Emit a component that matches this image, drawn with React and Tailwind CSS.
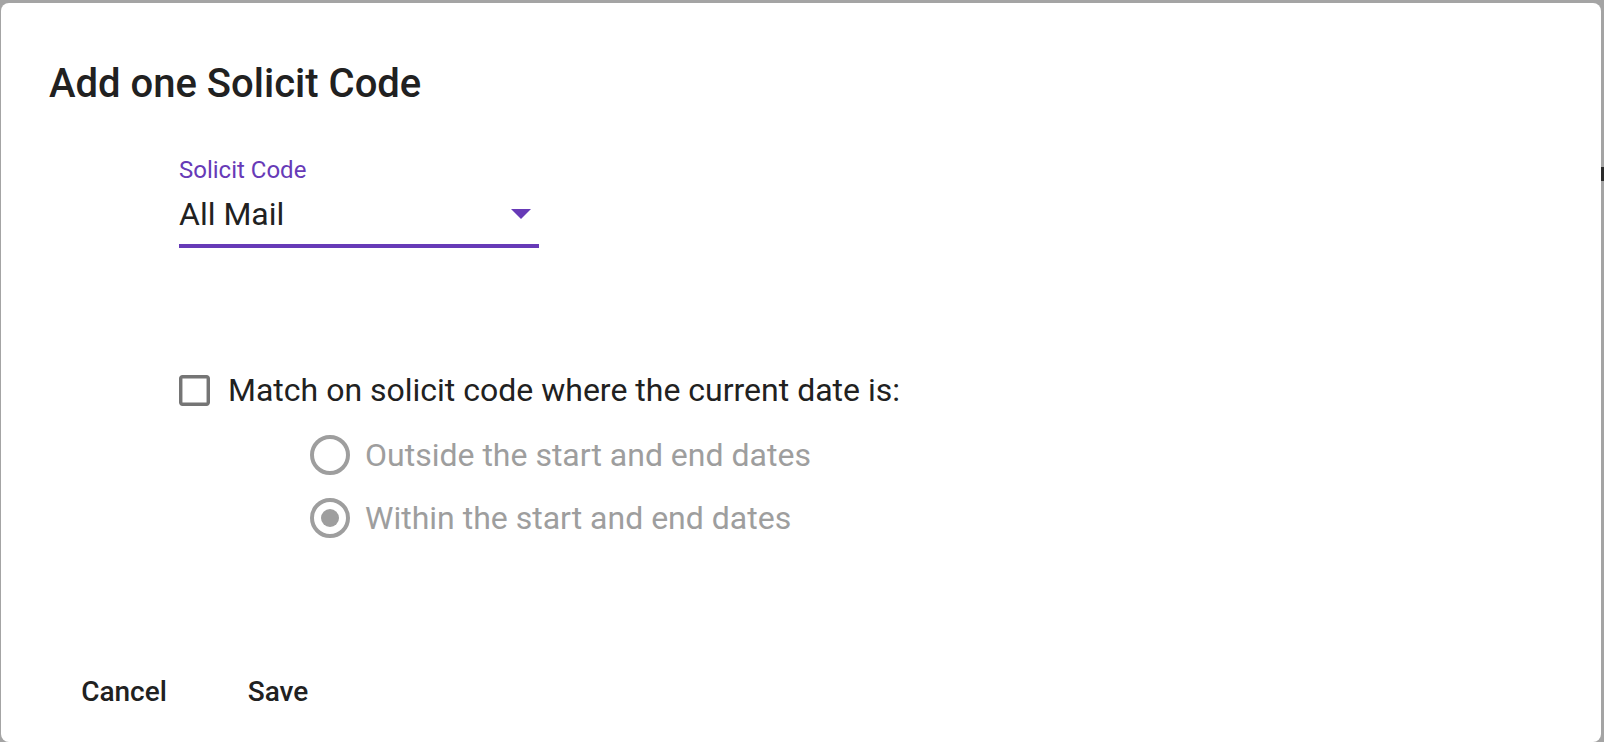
import React from "react";

function ArrowDown() {
  return (
    <svg width="20" height="10" viewBox="0 0 20 10" className="block">
      <path d="M0 0 L10 10 L20 0 Z" fill="#673ab7" />
    </svg>
  );
}

function CheckboxBlank() {
  return (
    <svg width="31" height="31" viewBox="3 3 18 18" className="block shrink-0">
      <path
        fill="#757575"
        d="M19 5v14H5V5h14m0-2H5c-1.11 0-2 .9-2 2v14c0 1.1.89 2 2 2h14c1.1 0 2-.9 2-2V5c0-1.1-.9-2-2-2z"
      />
    </svg>
  );
}

function Radio({ checked }) {
  return (
    <svg width="40" height="40" viewBox="0 0 40 40" className="block shrink-0">
      <circle cx="20" cy="20" r="18" fill="none" stroke="#9e9e9e" strokeWidth="4" />
      {checked && <circle cx="20" cy="20" r="9" fill="#9e9e9e" />}
    </svg>
  );
}

export default function App() {
  return (
    <div className="relative w-[1604px] h-[742px] bg-[#a4a4a4] pt-[3px] pl-[1px] pr-[3px] overflow-hidden font-['Roboto',sans-serif]">
      <div className="absolute left-[1601px] top-[167px] w-[3px] h-[14px] bg-[#2a2a2a]" />
      <div className="bg-white rounded-lg h-[739px] flex flex-col">
        <div className="pt-[49px] pl-[48px]">
          <h2 className="text-[40px] leading-[64px] font-medium text-[#212121]">
            Add one Solicit Code
          </h2>

          <div className="ml-[130px] mt-[42px] w-[360px]">
            <div className="text-[24px] leading-[24px] text-[#673ab7]">Solicit Code</div>
            <div className="mt-[16px] flex items-center justify-between h-[32px]">
              <span className="text-[32px] leading-[32px] text-[#212121]">All Mail</span>
              <span className="mr-[8px]">
                <ArrowDown />
              </span>
            </div>
            <div className="mt-[14px] h-[4px] bg-[#673ab7]" />
          </div>

          <div className="ml-[130px] mt-[126px]">
            <div className="flex items-center h-[32px] gap-[18px]">
              <CheckboxBlank />
              <span className="text-[32px] leading-[32px] text-[#212121]">
                Match on solicit code where the current date is:
              </span>
            </div>
            <div className="mt-[17px] ml-[131px]">
              <div className="flex items-center h-[63px] gap-[15px]">
                <Radio checked={false} />
                <span className="text-[32px] leading-[32px] text-[#9e9e9e]">
                  Outside the start and end dates
                </span>
              </div>
              <div className="flex items-center h-[63px] gap-[15px]">
                <Radio checked={true} />
                <span className="text-[32px] leading-[32px] text-[#9e9e9e]">
                  Within the start and end dates
                </span>
              </div>
            </div>
          </div>
        </div>

        <div className="mt-auto pb-[22px] pl-[59px] flex gap-[26px]">
          <button className="w-[128px] h-[56px] flex items-center justify-center text-[28px] leading-[28px] font-medium text-[#212121]">
            Cancel
          </button>
          <button className="w-[128px] h-[56px] flex items-center justify-center text-[28px] leading-[28px] font-medium text-[#212121]">
            Save
          </button>
        </div>
      </div>
    </div>
  );
}
